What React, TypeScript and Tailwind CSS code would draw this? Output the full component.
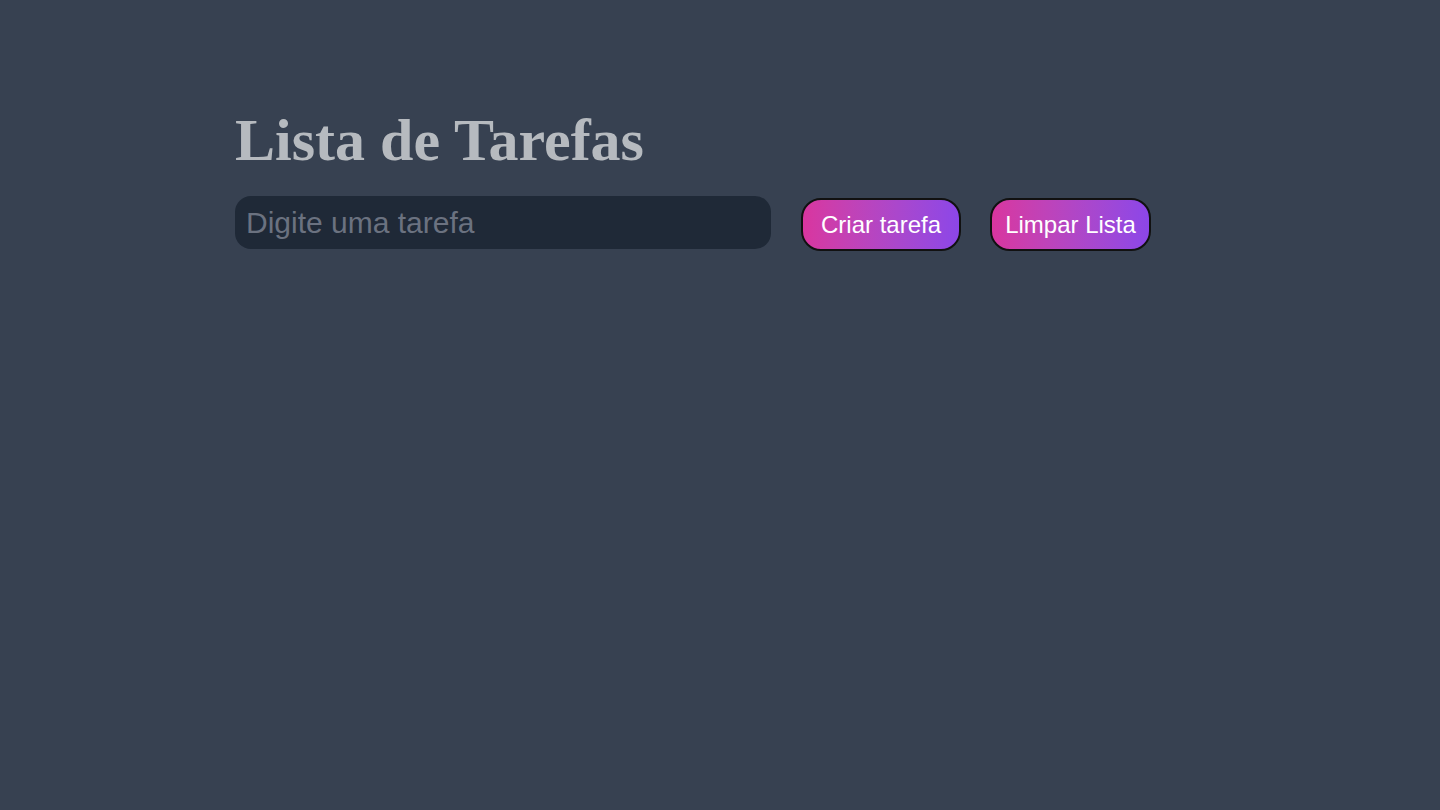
export default function App() {
  return (
    <div className="min-h-screen w-full bg-[#374151] pl-[235px] pt-[104px]">
      <h1 className="text-[60px] font-bold leading-[72px] text-[#b6babf] [font-family:'Liberation_Serif',serif]">
        Lista de Tarefas
      </h1>
      <div className="mt-[18px] flex items-center">
        <input
          type="text"
          placeholder="Digite uma tarefa"
          className="h-[53px] w-[536px] rounded-2xl bg-[#1f2937] px-[11px] text-[30px] text-gray-300 outline-none placeholder:text-[#6b7280] [font-family:'Liberation_Sans',sans-serif]"
        />
        <button className="ml-[30px] mt-[4px] h-[53px] w-[160px] rounded-[20px] border-2 border-[#111111] bg-gradient-to-r from-[#d9359f] to-[#8c46e8] text-[24px] text-white [font-family:'Liberation_Sans',sans-serif]">
          Criar tarefa
        </button>
        <button className="ml-[29px] mt-[4px] h-[53px] w-[161px] rounded-[20px] border-2 border-[#111111] bg-gradient-to-r from-[#d9359f] to-[#8c46e8] text-[24px] text-white [font-family:'Liberation_Sans',sans-serif]">
          Limpar Lista
        </button>
      </div>
    </div>
  );
}
